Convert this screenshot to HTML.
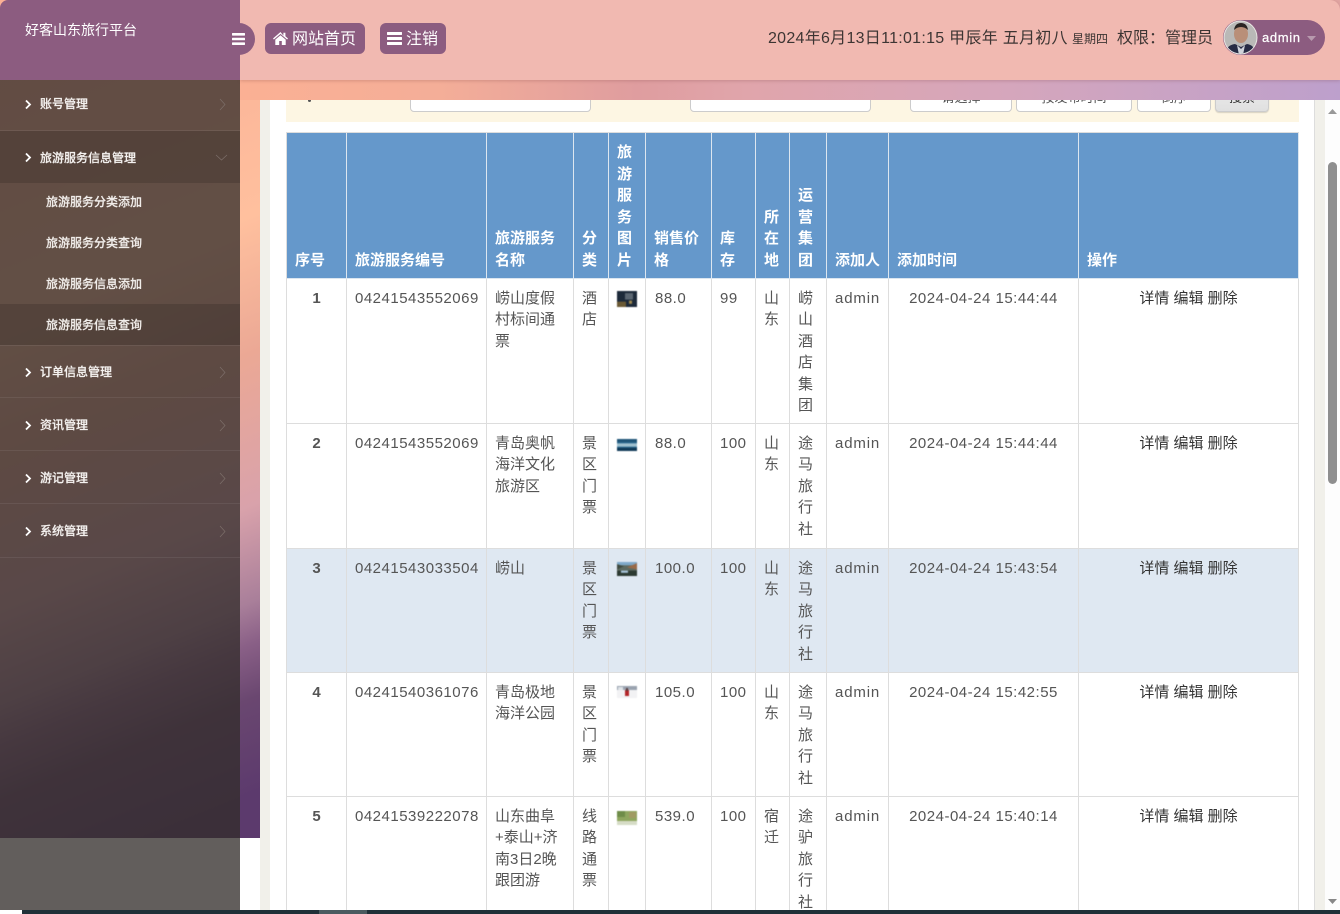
<!DOCTYPE html>
<html lang="zh"><head><meta charset="utf-8"><title>好客山东旅行平台</title>
<style>
*{box-sizing:border-box}
html,body{margin:0;padding:0;width:1340px;height:914px;overflow:hidden;background:#fff;font-family:"Liberation Sans","Noto Sans CJK SC",sans-serif}
.abs{position:absolute}
#bg{position:absolute;left:0;top:0;width:1340px;height:838px;background:linear-gradient(158deg,#fbb094 0%,#fcb79a 14%,#ffc09e 23%,#eba895 33%,#d9a2ab 44%,#a97f9a 51%,#8a6087 54%,#6a4770 58%,#5c3a6d 65%,#5c3a6d 100%)}
#strip{position:absolute;left:240px;top:80px;width:1100px;height:20px;background:linear-gradient(90deg,#fbb094 0%,#f4ae98 18%,#df9d9f 36%,#e0a5ab 46%,#d5a6bc 70%,#bda0cc 100%)}
#hl{position:absolute;left:0;top:0;width:240px;height:80px;background:#8c5c80;border-top-left-radius:8px;color:#fff;font-size:14px;line-height:20px;padding:20px 0 0 25px}
#hr{position:absolute;left:240px;top:0;width:1100px;height:80px;background:#f1b9b1;border-top-right-radius:10px;box-shadow:0 1px 3px rgba(120,60,60,.25)}
#tog{position:absolute;left:222px;top:23px;width:33px;height:32px;background:#8c5c80;border-radius:0 16px 16px 0}
.nb{position:absolute;top:23px;height:31px;background:#8c5c80;border-radius:6px;color:#fff;font-size:16px;line-height:30px;white-space:nowrap}
.nb span{top:2px}
#side{position:absolute;left:0;top:80px;width:240px;height:830px;background:rgba(50,45,42,.763);color:#fff}
.m{position:absolute;left:0;width:240px;font-size:12px;line-height:16px;font-weight:500;color:#f4f1ef;border-bottom:1px solid rgba(255,255,255,.07);-webkit-text-stroke:.2px #f4f1ef}
.m span{position:absolute;left:40px;white-space:nowrap}
.m svg{position:absolute}
.s{position:absolute;left:0;width:240px;font-size:12px;line-height:16px;font-weight:500;color:#f0ece9;-webkit-text-stroke:.2px #f0ece9}
.s span{position:absolute;left:46px;white-space:nowrap}
#main{position:absolute;left:260px;top:100px;width:1065px;height:810px;background:#f1f0ea;overflow:hidden}
#panel{position:absolute;left:10px;top:0;width:1045px;height:810px;background:#fff;border-right:1px solid #ddd;overflow:hidden}
#filter{position:absolute;left:16px;top:0;width:1013px;height:22px;background:#fdf6e3}
.f{position:absolute;top:-28px;height:40px;background:#fff;border:1px solid #ccc;border-radius:4px;font-size:13px;color:#555;text-align:center;line-height:49px;white-space:nowrap}
table{position:absolute;left:16px;top:32px;width:1013px;border-collapse:separate;border-spacing:0;table-layout:fixed;border-left:1px solid #ddd;border-top:1px solid #ddd;font-size:15px;line-height:21.43px;color:#555}
th,td{padding:8px;border-right:1px solid #ddd;border-bottom:1px solid #ddd;word-break:break-all;overflow:hidden}
th{background:#6598cb;color:#fff;font-weight:700;text-align:left;vertical-align:bottom;border-color:#dce6f0;padding-bottom:7px}
td{vertical-align:top;padding-top:9px;padding-bottom:0}
td.c{text-align:center}
tr.alt td{background:#dfe8f2}
.n{letter-spacing:.5px}
.a{letter-spacing:.85px;white-space:nowrap}
.b{font-weight:700;text-align:center;font-size:15px}
.op{text-align:center;color:#333;white-space:nowrap}
.th{display:block;width:20px;margin-left:0;filter:blur(.4px)}
#sb{position:absolute;left:1325px;top:100px;width:15px;height:810px;background:#fdfdfd}
#bar{position:absolute;left:22px;top:910px;width:1318px;height:4px;background:#203038}
</style></head>
<body>
<div id="bg"></div>
<div id="strip"></div>
<div id="main">
 <div id="panel">
  <div id="filter">
   <div class="abs" style="left:22px;top:-1px;width:3px;height:3px;border-radius:2px;background:#555"></div>
   <div class="f" style="left:124px;width:181px"></div>
   <div class="f" style="left:404px;width:181px"></div>
   <div class="f" style="left:624px;width:102px">请选择</div>
   <div class="f" style="left:730px;width:116px">按发布时间</div>
   <div class="f" style="left:851px;width:74px">倒序</div>
   <div class="f" style="left:929px;width:54px;background:linear-gradient(#f2f2f2,#e0e0e0);box-shadow:0 1px 1px rgba(0,0,0,.15);color:#333">搜索</div>
  </div>
  <table>
   <colgroup><col style="width:60px"><col style="width:140px"><col style="width:87px"><col style="width:35px"><col style="width:37px"><col style="width:66px"><col style="width:44px"><col style="width:34px"><col style="width:37px"><col style="width:62px"><col style="width:190px"><col style="width:220px"></colgroup>
   <tr style="height:146px"><th>序号</th><th>旅游服务编号</th><th>旅游服务名称</th><th>分类</th><th>旅游服务图片</th><th>销售价格</th><th>库存</th><th>所在地</th><th>运营集团</th><th style="white-space:nowrap">添加人</th><th>添加时间</th><th>操作</th></tr>
   <tr style="height:145px"><td class="b">1</td><td class="n" style="white-space:nowrap">04241543552069</td><td>崂山度假村标间通票</td><td>酒店</td><td style="padding-top:12px"><svg class="th" height="16" viewBox="0 0 20 15" preserveAspectRatio="none"><rect width="20" height="15" fill="#1d2a3a"/><rect x="8" y="2" width="8" height="6" fill="#5b6672"/><rect x="0" y="10" width="9" height="5" fill="#6b5a35"/><rect x="12" y="9" width="3" height="3" fill="#a08a50"/></svg></td><td class="n" style="padding-left:9px">88.0</td><td class="n">99</td><td>山东</td><td>崂山酒店集团</td><td class="a">admin</td><td class="c n">2024-04-24 15:44:44</td><td class="op">详情 编辑 删除</td></tr>
   <tr style="height:125px"><td class="b">2</td><td class="n" style="white-space:nowrap">04241543552069</td><td>青岛奥帆海洋文化旅游区</td><td>景区门票</td><td style="padding-top:15px"><svg class="th" height="12" viewBox="0 0 20 11" preserveAspectRatio="none"><rect width="20" height="11" fill="#2f6d92"/><rect y="0" width="20" height="3" fill="#1f5578"/><rect y="4" width="20" height="3" fill="#9fc0cf"/><rect y="8" width="20" height="3" fill="#103a58"/></svg></td><td class="n" style="padding-left:9px">88.0</td><td class="n">100</td><td>山东</td><td>途马旅行社</td><td class="a">admin</td><td class="c n">2024-04-24 15:44:44</td><td class="op">详情 编辑 删除</td></tr>
   <tr class="alt" style="height:124px"><td class="b">3</td><td class="n" style="white-space:nowrap">04241543033504</td><td>崂山</td><td>景区门票</td><td style="padding-top:13px"><svg class="th" height="14" viewBox="0 0 20 13" preserveAspectRatio="none"><rect width="20" height="13" fill="#5d6a60"/><rect width="20" height="3" fill="#7fa9c9"/><polygon points="0,2 7,4 0,7" fill="#3f4a40"/><polygon points="10,5 20,1 20,7" fill="#9a6a48"/><rect y="8" width="20" height="5" fill="#2c3a32"/><rect x="4" y="8" width="7" height="2" fill="#a9c6dc"/></svg></td><td class="n" style="padding-left:9px">100.0</td><td class="n">100</td><td>山东</td><td>途马旅行社</td><td class="a">admin</td><td class="c n">2024-04-24 15:43:54</td><td class="op">详情 编辑 删除</td></tr>
   <tr style="height:124px"><td class="b">4</td><td class="n" style="white-space:nowrap">04241540361076</td><td>青岛极地海洋公园</td><td>景区门票</td><td style="padding-top:13px"><svg class="th" height="12" viewBox="0 0 20 12" preserveAspectRatio="none"><rect width="20" height="12" fill="#f2f2f4"/><rect width="20" height="4" fill="#9aa3b0"/><rect x="1" y="1" width="5" height="3" fill="#dfe3e8"/><rect x="8" y="4" width="4" height="6" fill="#b4262a"/><rect x="9" y="2" width="2" height="3" fill="#5a4040"/></svg></td><td class="n" style="padding-left:9px">105.0</td><td class="n">100</td><td>山东</td><td>途马旅行社</td><td class="a">admin</td><td class="c n">2024-04-24 15:42:55</td><td class="op">详情 编辑 删除</td></tr>
   <tr style="height:140px"><td class="b">5</td><td class="n" style="white-space:nowrap">04241539222078</td><td style="white-space:nowrap">山东曲阜<br>+泰山+济<br>南3日2晚<br>跟团游</td><td>线路通票</td><td style="padding-top:14px"><svg class="th" height="14" viewBox="0 0 20 14" preserveAspectRatio="none"><rect width="20" height="14" fill="#8ea65e"/><rect x="0" y="0" width="8" height="6" fill="#6e8c48"/><rect x="12" y="1" width="7" height="6" fill="#a09a62"/><rect y="10" width="20" height="4" fill="#d6dcc6"/></svg></td><td class="n" style="padding-left:9px">539.0</td><td class="n">100</td><td>宿迁</td><td>途驴旅行社</td><td class="a">admin</td><td class="c n">2024-04-24 15:40:14</td><td class="op">详情 编辑 删除</td></tr>
  </table>
 </div>
</div>
<div id="sb">
 <svg class="abs" style="left:2px;top:8px" width="11" height="7"><polygon points="5.5,1 10,6 1,6" fill="#999"/></svg>
 <div class="abs" style="left:3px;top:62px;width:9px;height:322px;background:#8f8f8f;border-radius:5px"></div>
 <svg class="abs" style="left:2px;top:798px" width="11" height="7"><polygon points="1,1 10,1 5.5,6" fill="#888"/></svg>
</div>
<div id="bar"><div class="abs" style="left:297px;top:0;width:48px;height:4px;background:#4b5b60"></div></div>

<div id="side">
 <div class="m" style="top:0;height:51px"><svg style="left:24px;top:19px" width="8" height="11" viewBox="0 0 8 11"><path d="M2 1.5 6 5.5 2 9.5" fill="none" stroke="#fff" stroke-width="1.8"/></svg><span style="top:16px">账号管理</span><svg style="left:219px;top:18px" width="7" height="13" viewBox="0 0 7 13"><path d="M1 1 6 6.5 1 12" fill="none" stroke="#7d6f6a" stroke-width=".7"/></svg></div>
 <div class="m" style="top:51px;height:52px;background:rgba(0,0,0,.14);border-bottom:0"><svg style="left:24px;top:21px" width="8" height="11" viewBox="0 0 8 11"><path d="M2 1.5 6 5.5 2 9.5" fill="none" stroke="#fff" stroke-width="1.8"/></svg><span style="top:19px">旅游服务信息管理</span><svg style="left:215px;top:23px" width="13" height="7" viewBox="0 0 13 7"><path d="M1 1 6.5 6 12 1" fill="none" stroke="#7d6f6a" stroke-width=".7"/></svg></div>
 <div class="s" style="top:103px;height:41px"><span style="top:11px">旅游服务分类添加</span></div>
 <div class="s" style="top:144px;height:41px"><span style="top:11px">旅游服务分类查询</span></div>
 <div class="s" style="top:185px;height:39px"><span style="top:11px">旅游服务信息添加</span></div>
 <div class="s" style="top:224px;height:41px;background:rgba(0,0,0,.14)"><span style="top:13px">旅游服务信息查询</span></div>
 <div class="m" style="top:265px;height:53px;border-top:1px solid rgba(255,255,255,.07)"><svg style="left:24px;top:21px" width="8" height="11" viewBox="0 0 8 11"><path d="M2 1.5 6 5.5 2 9.5" fill="none" stroke="#fff" stroke-width="1.8"/></svg><span style="top:18px">订单信息管理</span><svg style="left:219px;top:20px" width="7" height="13" viewBox="0 0 7 13"><path d="M1 1 6 6.5 1 12" fill="none" stroke="#7d6f6a" stroke-width=".7"/></svg></div>
 <div class="m" style="top:318px;height:53px"><svg style="left:24px;top:22px" width="8" height="11" viewBox="0 0 8 11"><path d="M2 1.5 6 5.5 2 9.5" fill="none" stroke="#fff" stroke-width="1.8"/></svg><span style="top:19px">资讯管理</span><svg style="left:219px;top:21px" width="7" height="13" viewBox="0 0 7 13"><path d="M1 1 6 6.5 1 12" fill="none" stroke="#7d6f6a" stroke-width=".7"/></svg></div>
 <div class="m" style="top:371px;height:53px"><svg style="left:24px;top:22px" width="8" height="11" viewBox="0 0 8 11"><path d="M2 1.5 6 5.5 2 9.5" fill="none" stroke="#fff" stroke-width="1.8"/></svg><span style="top:19px">游记管理</span><svg style="left:219px;top:21px" width="7" height="13" viewBox="0 0 7 13"><path d="M1 1 6 6.5 1 12" fill="none" stroke="#7d6f6a" stroke-width=".7"/></svg></div>
 <div class="m" style="top:424px;height:54px"><svg style="left:24px;top:22px" width="8" height="11" viewBox="0 0 8 11"><path d="M2 1.5 6 5.5 2 9.5" fill="none" stroke="#fff" stroke-width="1.8"/></svg><span style="top:19px">系统管理</span><svg style="left:219px;top:21px" width="7" height="13" viewBox="0 0 7 13"><path d="M1 1 6 6.5 1 12" fill="none" stroke="#7d6f6a" stroke-width=".7"/></svg></div>
</div>

<div id="hr"></div>
<div id="hl">好客山东旅行平台</div>
<div id="tog"><svg class="abs" style="left:10px;top:10px" width="13" height="12" viewBox="0 0 13 12"><rect width="13" height="2.6" rx=".6" y="0" fill="#fff"/><rect width="13" height="2.6" rx=".6" y="4.7" fill="#fff"/><rect width="13" height="2.6" rx=".6" y="9.4" fill="#fff"/></svg></div>
<div class="nb" style="left:265px;width:100px"><svg class="abs" style="left:8px;top:9px" width="15" height="13" viewBox="0 0 15 13"><path d="M7.5 0 0 6.5l.9 1L7.5 1.9l6.6 5.6.9-1-2.6-2.2V.8h-2v2.8zM2.3 7.6V13h3.9V9h2.6v4h3.9V7.6L7.5 3.3z" fill="#fff"/></svg><span class="abs" style="left:27px">网站首页</span></div>
<div class="nb" style="left:380px;width:66px"><svg class="abs" style="left:7px;top:9px" width="15" height="13" viewBox="0 0 15 13"><rect width="15" height="3" rx=".6" y="0" fill="#fff"/><rect width="15" height="3" rx=".6" y="5" fill="#fff"/><rect width="15" height="3" rx=".6" y="10" fill="#fff"/></svg><span class="abs" style="left:26px">注销</span></div>
<div class="abs" style="left:768px;top:27px;font-size:16px;line-height:24px;color:#3d3533;white-space:nowrap"><span style="letter-spacing:.28px">2024年6月13日11:01:15 甲辰年 五月初八</span></div>
<div class="abs" style="left:1072px;top:30px;font-size:12px;line-height:18px;color:#3d3533;white-space:nowrap">星期四</div>
<div class="abs" style="left:1117px;top:27px;font-size:16px;line-height:24px;color:#3d3533;white-space:nowrap">权限：管理员</div>
<div class="abs" style="left:1223px;top:20px;width:102px;height:35px;border-radius:18px;background:#8c5c80"></div>
<svg class="abs" style="left:1223px;top:20px" width="35" height="35" viewBox="0 0 35 35"><defs><clipPath id="av"><circle cx="17.5" cy="17.5" r="16"/></clipPath></defs><circle cx="17.5" cy="17.5" r="17" fill="#e9e6e3"/><g clip-path="url(#av)"><rect width="35" height="35" fill="#b9b9b7"/><ellipse cx="18" cy="14" rx="7" ry="9" fill="#b98f78"/><path d="M11 10q1-7 7-7t7 7q-3-3-7-3t-7 3z" fill="#2a2422"/><path d="M2 35q1-10 10-11l6 3 6-3q8 1 9 11z" fill="#262b44"/><path d="M14 25l4 4 4-4-2 10h-4z" fill="#cfd3da"/></g></svg>
<div class="abs" style="left:1262px;top:29px;font-size:13px;line-height:18px;color:#fff;white-space:nowrap;letter-spacing:.65px;-webkit-text-stroke:.25px #fff">admin</div>
<svg class="abs" style="left:1307px;top:36px" width="9" height="5"><polygon points="0,0 9,0 4.5,5" fill="#b89aae"/></svg>
</body></html>
